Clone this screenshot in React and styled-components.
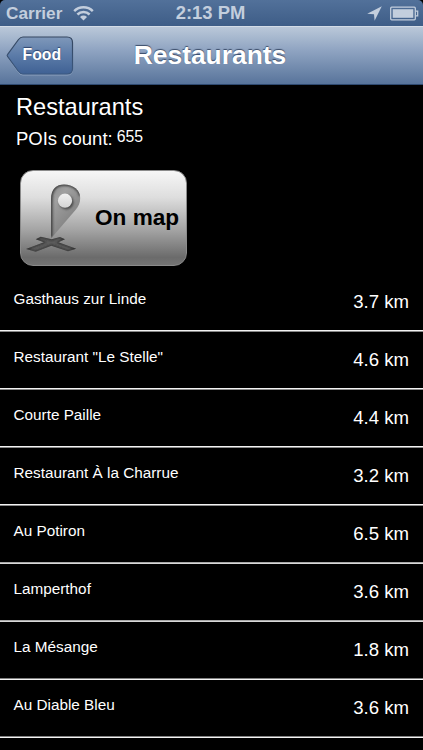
import React from 'react'
import styled, { createGlobalStyle } from 'styled-components'

const GlobalStyle = createGlobalStyle`
  * { box-sizing: border-box; }
  body {
    margin: 0;
    background: #000;
    color: #fff;
    font-family: "Liberation Sans", Arial, sans-serif;
  }
`

const Screen = styled.div`
  width: 423px;
  height: 750px;
  overflow: hidden;
  background: #000;
`

const StatusBar = styled.div`
  display: grid;
  grid-template-columns: 1fr auto 1fr;
  align-items: center;
  height: 26px;
  padding: 0 4px 0 6px;
  border-radius: 5px 5px 0 0;
  background: linear-gradient(#52719a, #3e5d87);
  color: #c3cedd;
  font-weight: bold;
`

const StatusSide = styled.div`
  display: flex;
  align-items: center;
  justify-content: ${props => props.$end ? 'flex-end' : 'flex-start'};
  gap: ${props => props.$end ? '8px' : '11px'};
  font-size: 17.2px;
  line-height: 26px;
  svg { display: block; }
`

const Clock = styled.div`
  font-size: 18.4px;
  padding-right: 4px;
`

const NavBar = styled.div`
  display: grid;
  grid-template-columns: 1fr auto 1fr;
  align-items: center;
  height: 59px;
  padding-left: 6px;
  border-top: 1px solid #d3dce7;
  border-bottom: 1px solid #2f4a70;
  background: linear-gradient(#bac8d9, #8ea3c1 42%, #58749b);
`

const BackButton = styled.button`
  display: grid;
  width: 68px;
  height: 40px;
  padding: 0;
  border: 0;
  background: none;
  color: #fff;
  font: bold 15.8px "Liberation Sans", Arial, sans-serif;
  text-shadow: 0 -1px 1px rgba(20, 40, 80, 0.7);
  > * { grid-area: 1 / 1; }
  span {
    align-self: center;
    justify-self: start;
    padding-left: 16.5px;
    padding-bottom: 1px;
  }
`

const NavTitle = styled.h1`
  margin: 0;
  font-size: 26.4px;
  line-height: 30px;
  text-shadow: 0 -1px 1px rgba(30, 45, 75, 0.75);
  padding-right: 9px;
  padding-bottom: 1px;
`

const Summary = styled.section`
  height: 85px;
  padding: 8px 16px 0;
`

const Heading = styled.h2`
  margin: 0;
  font-size: 23.6px;
  font-weight: normal;
  line-height: 28px;
`

const Count = styled.div`
  display: flex;
  align-items: flex-start;
  gap: 4px;
  margin-top: 6px;
  font-size: 18.5px;
  line-height: 24px;
  span {
    font-size: 15.8px;
    line-height: 20px;
  }
`

const MapButton = styled.button`
  display: flex;
  align-items: center;
  width: 167px;
  height: 96px;
  margin: 0 0 0 20px;
  padding: 0 0 0 4px;
  border: 1px solid #8b8b8b;
  border-radius: 13px;
  background: linear-gradient(#f6f6f6, #dedede 28%, #a5a5a5 62%, #6b6b6b 92%, #747474);
  color: #000;
  font: bold 22.6px "Liberation Sans", Arial, sans-serif;
  svg { flex: none; }
  span { margin-left: 14px; white-space: nowrap; }
`

const List = styled.ul`
  margin: 8px 0 0;
  padding: 0;
  list-style: none;
`

const Row = styled.li`
  display: flex;
  justify-content: space-between;
  height: 58px;
  padding: 0 14px 0 13.5px;
  border-bottom: 1px solid #888;
  box-shadow: inset 0 -1px #f2f2f2;
  &:nth-child(n + 5) {
    border-bottom-color: #d8d8d8;
    box-shadow: inset 0 -1px #a8a8a8;
  }
  &:nth-child(n + 7) {
    border-bottom-color: #f4f4f4;
    box-shadow: inset 0 -1px #808080;
  }
`

const Name = styled.span`
  padding-top: 15px;
  font-size: 15.3px;
  line-height: 20px;
`

const Distance = styled.span`
  padding-top: 16px;
  font-size: 18.6px;
  line-height: 24px;
`

const places = [
  { name: 'Gasthaus zur Linde', distance: '3.7 km' },
  { name: 'Restaurant "Le Stelle"', distance: '4.6 km' },
  { name: 'Courte Paille', distance: '4.4 km' },
  { name: 'Restaurant À la Charrue', distance: '3.2 km' },
  { name: 'Au Potiron', distance: '6.5 km' },
  { name: 'Lamperthof', distance: '3.6 km' },
  { name: 'La Mésange', distance: '1.8 km' },
  { name: 'Au Diable Bleu', distance: '3.6 km' },
]

const pinPath = 'M26 55.5V16C26 6 31.5 1.5 39 1.5c9 0 16.200 5.500 16.200 13.500 0 5-1.700 8-4.700 12z'
const crossPath = 'M10.700 56.300l5-2.600 11 2.600 8.300-2.300 5 2.300-6.700 3 18 6.400-8.300 2.600-16.700-5.600-15.600 6L1 66l18-6.700z'

function WifiIcon() {
  return (
    <svg width="21" height="16" viewBox="0 0 21 16">
      <g fill="none" stroke="#c3cedd" strokeWidth="2.5">
        <path d="M1.2 6.2a13.2 13.2 0 0 1 18.6 0" />
        <path d="M4.4 9.5a8.6 8.6 0 0 1 12.2 0" />
      </g>
      <path d="M7 11.9a5 5 0 0 1 7 0L10.5 15.4z" fill="#c3cedd" />
    </svg>
  )
}

function LocationIcon() {
  return (
    <svg width="15" height="15" viewBox="0 0 15 15">
      <path d="M14.8.3 7.6 14.7 7 8.2.2 7.7z" fill="#c3cedd" />
    </svg>
  )
}

function BatteryIcon() {
  return (
    <svg width="29" height="15" viewBox="0 0 29 15">
      <rect x=".7" y="1.2" width="24.6" height="12.6" rx="1" fill="none" stroke="#c3cedd" strokeWidth="1.3" />
      <rect x="2.7" y="3.2" width="20.6" height="8.6" fill="#c3cedd" />
      <path d="M25.5 5.1h2.2v4.8h-2.2" fill="none" stroke="#c3cedd" strokeWidth="1.2" />
    </svg>
  )
}

function BackShape() {
  return (
    <svg width="68" height="40" viewBox="0 0 68 40">
      <defs>
        <linearGradient id="back" x1="0" y1="0" x2="0" y2="1">
          <stop offset="0" stopColor="#7f98ba" />
          <stop offset=".5" stopColor="#5b7ba8" />
          <stop offset="1" stopColor="#3f6194" />
        </linearGradient>
        <linearGradient id="backEdge" x1="0" y1="0" x2="0" y2="1">
          <stop offset="0" stopColor="#34465f" />
          <stop offset="1" stopColor="#3b5880" />
        </linearGradient>
      </defs>
      <path d="M17 2h44q5.5 0 5.5 5.5v26q0 5.5-5.5 5.5H17q-2.5 0-4.5-2.5L1.5 21q-.7-.8 0-1.6L12.5 4.5Q14.5 2 17 2z" fill="none" stroke="#a8b9d0" strokeOpacity=".6" />
      <path d="M17 1h44q5.5 0 5.5 5.5v26q0 5.5-5.5 5.5H17q-2.5 0-4.5-2.5L1.5 20.3q-.7-.8 0-1.6L12.5 3.5Q14.5 1 17 1z" fill="url(#back)" stroke="url(#backEdge)" strokeWidth="1.2" />
    </svg>
  )
}

function PinIcon() {
  return (
    <svg width="56" height="70" viewBox="0 0 56 70">
      <defs>
        <linearGradient id="pin" x1="0" y1="0" x2=".7" y2="1">
          <stop offset="0" stopColor="#808080" />
          <stop offset=".35" stopColor="#a0a0a0" />
          <stop offset="1" stopColor="#777" />
        </linearGradient>
        <linearGradient id="hole" x1="0" y1="0" x2="0" y2="1">
          <stop offset="0" stopColor="#f0f0f0" />
          <stop offset="1" stopColor="#d4d4d4" />
        </linearGradient>
        <clipPath id="pinClip">
          <path d={pinPath} />
        </clipPath>
        <clipPath id="crossClip">
          <path d={crossPath} />
        </clipPath>
        <filter id="soft" x="-20%" y="-20%" width="140%" height="140%">
          <feGaussianBlur stdDeviation=".9" />
        </filter>
      </defs>
      <g clipPath="url(#crossClip)">
        <path d="M0 50h56v20H0z" fill="#5c5c5c" />
        <path d={crossPath} fill="none" stroke="#2c2c2c" strokeWidth="1.6" filter="url(#soft)" />
      </g>
      <g clipPath="url(#pinClip)">
        <path d="M20 0h36v56H20z" fill="url(#pin)" />
        <path d="M26.2 54V16C26 6 31.5 1.5 39 1.5c9 0 16 5.5 16 11" fill="none" stroke="#383838" strokeWidth="2.6" filter="url(#soft)" />
        <circle cx="41.3" cy="19.2" r="7.2" fill="#484848" filter="url(#soft)" />
      </g>
      <circle cx="40" cy="17.7" r="7.1" fill="url(#hole)" />
    </svg>
  )
}

function App() {
  return (
    <Screen>
      <GlobalStyle />
      <StatusBar>
        <StatusSide>Carrier<WifiIcon /></StatusSide>
        <Clock>2:13 PM</Clock>
        <StatusSide $end><LocationIcon /><BatteryIcon /></StatusSide>
      </StatusBar>
      <NavBar>
        <BackButton>
          <BackShape />
          <span>Food</span>
        </BackButton>
        <NavTitle>Restaurants</NavTitle>
      </NavBar>
      <Summary>
        <Heading>Restaurants</Heading>
        <Count>POIs count: <span>655</span></Count>
      </Summary>
      <MapButton>
        <PinIcon />
        <span>On map</span>
      </MapButton>
      <List>
        {places.map(place => (
          <Row key={place.name}>
            <Name>{place.name}</Name>
            <Distance>{place.distance}</Distance>
          </Row>
        ))}
      </List>
    </Screen>
  )
}

export default App
